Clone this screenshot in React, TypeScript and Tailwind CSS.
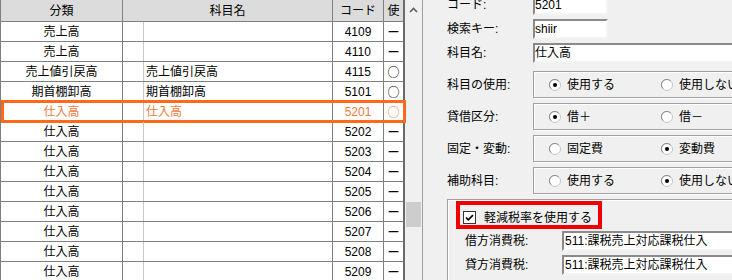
import React from "react";

interface Row {
  cat: string;
  name: string;
  code: string;
  use: string;
  active?: boolean;
}

const rows: Row[] = [
  { cat: "売上高", name: "", code: "4109", use: "ー" },
  { cat: "売上高", name: "", code: "4110", use: "ー" },
  { cat: "売上値引戻高", name: "売上値引戻高", code: "4115", use: "○" },
  { cat: "期首棚卸高", name: "期首棚卸高", code: "5101", use: "○" },
  { cat: "仕入高", name: "仕入高", code: "5201", use: "○", active: true },
  { cat: "仕入高", name: "", code: "5202", use: "ー" },
  { cat: "仕入高", name: "", code: "5203", use: "ー" },
  { cat: "仕入高", name: "", code: "5204", use: "ー" },
  { cat: "仕入高", name: "", code: "5205", use: "ー" },
  { cat: "仕入高", name: "", code: "5206", use: "ー" },
  { cat: "仕入高", name: "", code: "5207", use: "ー" },
  { cat: "仕入高", name: "", code: "5208", use: "ー" },
  { cat: "仕入高", name: "", code: "5209", use: "ー" },
];

const radioRows = [
  { label: "科目の使用:", a: "使用する", b: "使用しない", checked: 0 },
  { label: "貸借区分:", a: "借＋", b: "借－", checked: 0 },
  { label: "固定・変動:", a: "固定費", b: "変動費", checked: 1 },
  { label: "補助科目:", a: "使用する", b: "使用しない", checked: 1 },
];

const sunken =
  "h-[20px] bg-white border-2 border-t-[#8a8a8a] border-l-[#8a8a8a] border-r-[#f4f4f4] border-b-[#f4f4f4] flex items-center overflow-hidden whitespace-nowrap";

function Radio({ checked }: { checked: boolean }) {
  return (
    <svg width="12" height="12" viewBox="0 0 12 12" className="shrink-0">
      <circle cx="6" cy="6" r="5.5" fill="#fff" stroke="#c4c4c4" />
      <path d="M2 9.5 A5 5 0 0 1 9.5 2" stroke="#8a8a8a" fill="none" />
      {checked && <circle cx="6" cy="6" r="2" fill="#000" />}
    </svg>
  );
}

function Checkbox() {
  return (
    <svg width="13" height="13" viewBox="0 0 13 13" className="shrink-0">
      <rect x="0.5" y="0.5" width="12" height="12" fill="#fff" stroke="#333" />
      <path d="M3 6.5 L5.3 8.8 L10 4.2" stroke="#000" strokeWidth="1.7" fill="none" />
    </svg>
  );
}

export default function App() {
  return (
    <div className="w-[732px] h-[280px] overflow-hidden flex bg-[#f0f0f0] text-[12px] text-black font-['Liberation_Sans','Noto_Sans_CJK_JP',sans-serif]">
      {/* ===== 科目一覧グリッド ===== */}
      <div className="w-[405px] shrink-0 bg-white border-l border-l-[#808080] border-r-2 border-r-[#6b6b6b]">
        <div className="grid grid-cols-[122px_210px_51px_19px] h-[22px] bg-[#dcdcdc] border-b border-[#808080] leading-none">
          <div className="border-r border-[#808080] flex items-center justify-center">分類</div>
          <div className="border-r border-[#808080] flex items-center justify-center">科目名</div>
          <div className="border-r border-[#808080] flex items-center justify-center">コード</div>
          <div className="flex items-center justify-center">使</div>
        </div>

        {rows.map((r, i) => (
          <div
            key={i}
            className={`relative grid grid-cols-[122px_21px_189px_51px_19px] h-[20px] border-b border-[#808080] leading-none ${
              r.active ? "text-[#ef7a3c]" : ""
            }`}
          >
            <div className="border-r border-[#808080] flex items-center justify-center">{r.cat}</div>
            <div className="border-r border-[#c8c8c8]" />
            <div className="border-r border-[#808080] flex items-center pl-[2px]">{r.name}</div>
            <div className="border-r border-[#808080] flex items-center justify-center">{r.code}</div>
            <div className="flex items-center justify-center font-['Noto_Sans_CJK_JP',sans-serif] text-[12px] font-medium">
              {r.use}
            </div>
            {r.active && (
              <div className="absolute -top-[2px] -bottom-[2px] left-0 -right-[3px] border-[3px] border-[#ff6a1a]" />
            )}
          </div>
        ))}
      </div>

      {/* ===== スクロールバー ===== */}
      <div className="w-[18px] shrink-0 border-r border-[#a0a0a0] flex flex-col items-center">
        <svg width="9" height="6" viewBox="0 0 9 6" className="mt-[7px]">
          <path d="M1 5 L4.5 1.5 L8 5" stroke="#606060" strokeWidth="1.6" fill="none" />
        </svg>
        <div className="mt-[189px] w-[15px] h-[25px] bg-[#cdcdcd]" />
      </div>

      {/* ===== 詳細パネル ===== */}
      <div className="flex-1 min-w-0 overflow-hidden pl-[24px] flex flex-col">
        <div className="mt-[-5px] flex flex-col gap-[4px]">
          <div className="flex items-center">
            <span className="w-[86px] shrink-0">コード:</span>
            <div className={`${sunken} w-[75px]`}>5201</div>
          </div>
          <div className="flex items-center">
            <span className="w-[86px] shrink-0">検索キー:</span>
            <div className={`${sunken} w-[75px]`}>shiir</div>
          </div>
          <div className="flex items-center">
            <span className="w-[86px] shrink-0">科目名:</span>
            <div className={`${sunken} w-[300px] shrink-0`}>仕入高</div>
          </div>
        </div>

        <div className="mt-[8px] flex flex-col gap-[5px]">
          {radioRows.map((g) => (
            <div key={g.label} className="flex items-center">
              <span className="w-[86px] shrink-0">{g.label}</span>
              <div className="h-[27px] w-[300px] shrink-0 border border-[#a0a0a0] shadow-[inset_1px_1px_0_#fff,1px_1px_0_#fff] flex items-center pl-[15px] whitespace-nowrap">
                <div className="w-[112px] shrink-0 flex items-center gap-[6px]">
                  <Radio checked={g.checked === 0} />
                  <span>{g.a}</span>
                </div>
                <div className="shrink-0 flex items-center gap-[6px]">
                  <Radio checked={g.checked === 1} />
                  <span>{g.b}</span>
                </div>
              </div>
            </div>
          ))}
        </div>

        {/* 軽減税率グループ */}
        <div className="mt-[5px] w-[320px] h-[120px] shrink-0 border border-[#a0a0a0] shadow-[inset_1px_1px_0_#fff] pl-[8px] pt-[1px]">
          <div className="w-[146px] h-[28px] border-4 border-[#f00000] flex items-center pl-[3px] pt-[5px] whitespace-nowrap">
            <Checkbox />
            <span className="ml-[8px]">軽減税率を使用する</span>
          </div>
          <div className="mt-[2px] flex flex-col gap-[4px] pl-[9px]">
            <div className="flex items-center">
              <span className="w-[97px] shrink-0">借方消費税:</span>
              <div className={`${sunken} w-[220px] shrink-0 pl-[1px]`}>511:課税売上対応課税仕入</div>
            </div>
            <div className="flex items-center">
              <span className="w-[97px] shrink-0">貸方消費税:</span>
              <div className={`${sunken} w-[220px] shrink-0 pl-[1px]`}>511:課税売上対応課税仕入</div>
            </div>
          </div>
        </div>
      </div>
    </div>
  );
}
